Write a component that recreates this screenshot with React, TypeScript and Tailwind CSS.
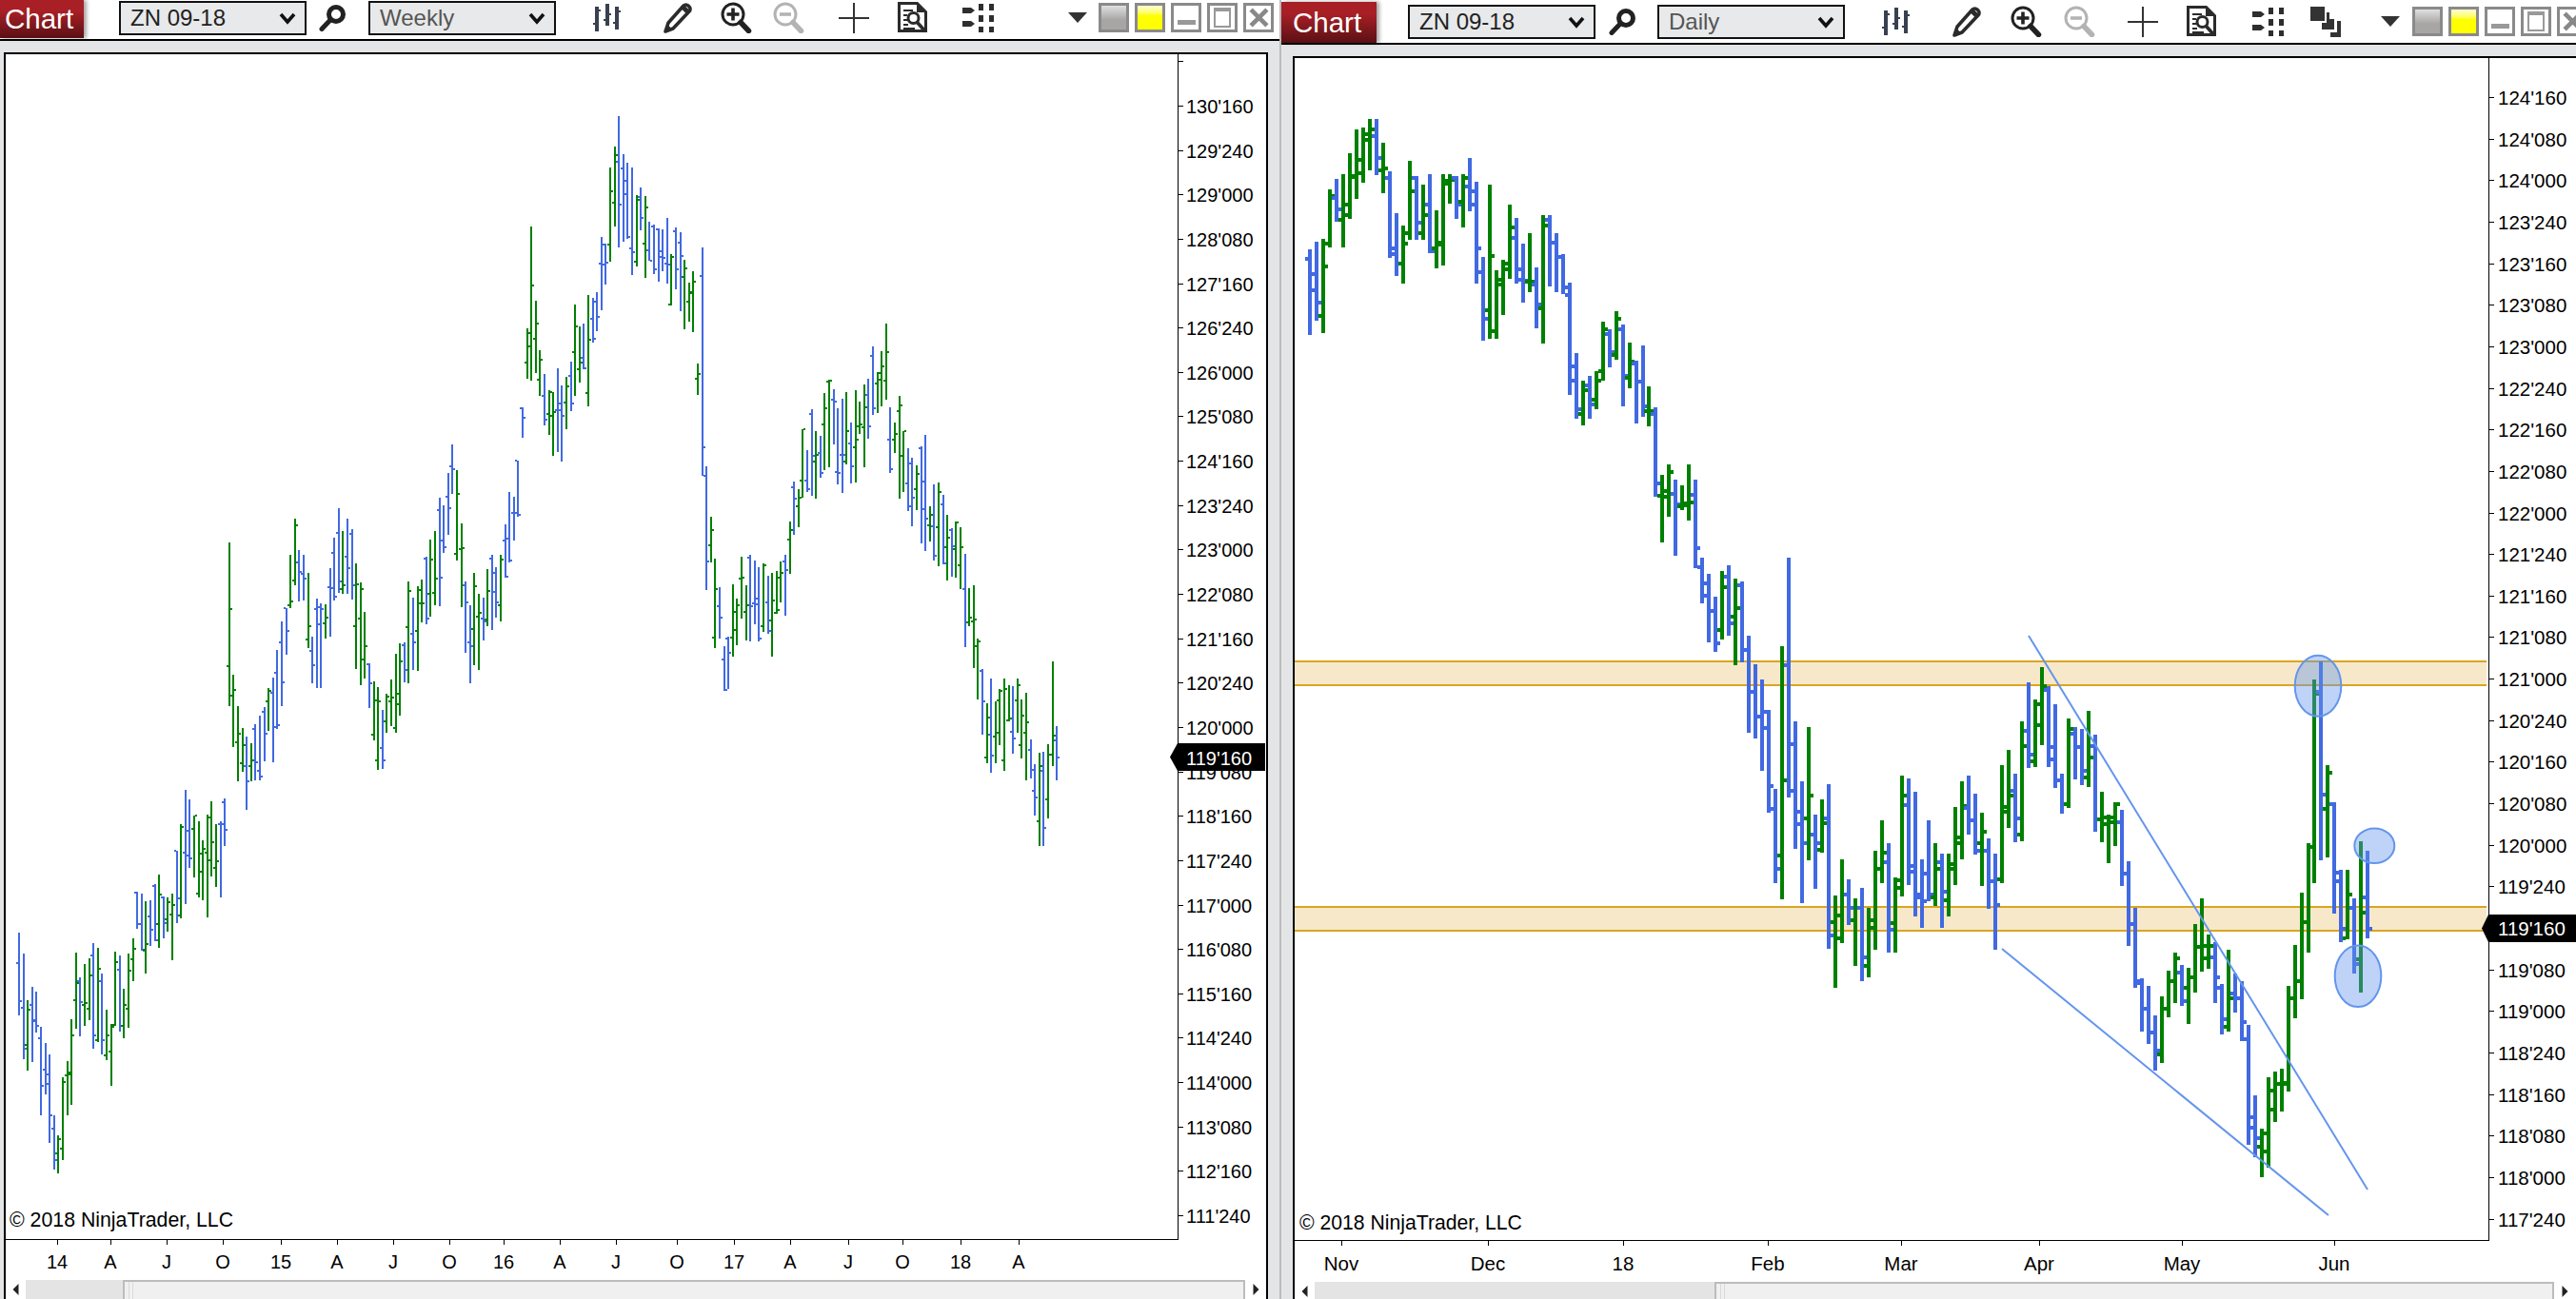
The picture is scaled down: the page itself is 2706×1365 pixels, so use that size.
import type { ReactNode } from "react";

type Bar = [high: number, low: number, open: number, close: number];

const GREEN = "#008000";
const BLUE = "#4169e1";
const LINE = "#6495ed";

// daily bars, read off the chart in crop units and converted to page pixels
const dailyA: Bar[] = [
  [517, 788, 545, 594], [492, 740, 645, 684], [483, 780, 726, 570], [327, 510, 497, 348], [294, 428, 355, 390],
  [279, 510, 423, 375], [213, 420, 408, 285], [138, 357, 288, 234], [132, 306, 276, 153], [105, 267, 171, 138],
  [105, 282, 160, 228], [180, 339, 267, 260], [270, 543, 291, 513], [402, 600, 531, 561], [441, 624, 561, 497],
  [237, 486, 465, 333], [285, 486, 291, 432], [312, 486, 465, 408], [279, 528, 375, 522], [393, 576, 513, 495],
  [279, 567, 501, 300], [279, 372, 309, 297], [285, 420, 291, 375], [279, 447, 366, 291], [228, 396, 318, 333],
  [303, 624, 375, 513], [540, 804, 588, 735], [312, 798, 708, 537], [582, 798, 774, 612], [549, 723, 627, 561],
  [375, 609, 579, 447], [417, 624, 480, 579], [498, 684, 612, 615], [465, 651, 618, 618], [573, 765, 627, 690],
  [408, 813, 702, 441], [408, 633, 423, 495], [465, 651, 495, 540], [531, 657, 540, 636], [621, 975, 660, 930],
  [843, 1050, 885, 1020], [930, 1070, 1035, 960], [915, 1050, 945, 1005], [900, 1020, 990, 930], [744, 930, 900, 768],
  [768, 888, 783, 840], [711, 864, 849, 735],
];

const dailyB: Bar[] = [
  [85, 262, 95, 195], [124, 222, 200, 166], [163, 300, 170, 208], [130, 285, 208, 262], [219, 305, 272, 272],
  [264, 457, 278, 430], [411, 558, 455, 445], [388, 502, 458, 404], [421, 587, 452, 475], [433, 487, 478, 472],
  [388, 510, 476, 470], [421, 613, 453, 570], [590, 688, 610, 645], [625, 773, 672, 706], [675, 795, 706, 775],
  [619, 767, 747, 655], [607, 760, 632, 733], [635, 822, 717, 700], [642, 818, 650, 790], [759, 969, 790, 880],
  [821, 981, 880, 935], [854, 1053, 935, 960], [921, 1144, 925, 1086], [1091, 1295, 1135, 1265], [782, 1330, 1236, 1072],
  [590, 1109, 824, 1095], [945, 1222, 994, 1140], [1075, 1340, 1167, 1209], [957, 1245, 1156, 1105], [1147, 1307, 1190, 1209],
  [1114, 1229, 1224, 1165], [1081, 1437, 1156, 1410], [1322, 1522, 1381, 1365], [1244, 1425, 1415, 1320], [1287, 1385, 1320, 1350],
  [1329, 1476, 1376, 1350], [1306, 1509, 1350, 1457], [1349, 1499, 1476, 1376], [1226, 1441, 1392, 1265], [1159, 1295, 1265, 1229],
  [1209, 1447, 1250, 1397], [1283, 1447, 1382, 1290], [1063, 1324, 1306, 1105], [1069, 1301, 1127, 1270], [1098, 1369, 1259, 1320],
  [1244, 1392, 1326, 1335], [1159, 1335, 1275, 1320], [1209, 1346, 1326, 1265], [1232, 1392, 1250, 1315], [1232, 1369, 1332, 1265],
  [1131, 1301, 1255, 1196], [1075, 1245, 1208, 1128], [1063, 1190, 1133, 1160], [1102, 1234, 1160, 1225], [1143, 1301, 1208, 1185],
  [1199, 1352, 1225, 1292], [1232, 1441, 1292, 1342], [1040, 1295, 1288, 1130], [1007, 1177, 1140, 1105], [1058, 1206, 1095, 1156],
];

const dailyC: Bar[] = [
  [261, 566, 548, 324], [162, 380, 285, 345], [204, 375, 363, 216], [123, 321, 270, 172], [171, 375, 180, 325],
  [216, 428, 356, 410], [393, 495, 410, 471], [254, 480, 470, 280], [276, 408, 292, 325], [280, 422, 325, 385],
  [234, 428, 402, 352], [294, 540, 324, 510], [438, 567, 510, 505], [497, 620, 520, 503], [466, 578, 515, 470],
  [485, 678, 515, 646], [615, 830, 646, 775], [733, 936, 775, 925], [912, 1047, 920, 990], [931, 1077, 990, 1050],
  [1005, 1146, 1050, 1095], [958, 1127, 1105, 990], [893, 1012, 990, 920], [847, 975, 920, 862], [878, 982, 897, 970],
  [885, 1028, 935, 910], [774, 948, 910, 833], [709, 895, 833, 830], [800, 887, 860, 830], [821, 975, 858, 910],
  [926, 1053, 935, 1015], [839, 1047, 1035, 962], [900, 1000, 950, 962], [920, 1073, 962, 1022], [1030, 1335, 1065, 1265],
  [1209, 1366, 1290, 1318], [1293, 1415, 1338, 1305], [1163, 1392, 1350, 1196], [1148, 1275, 1245, 1180], [1141, 1250, 1180, 1180],
  [931, 1198, 1178, 962], [827, 1012, 962, 920], [695, 966, 920, 770], [570, 848, 770, 580], [154, 670, 580, 190],
];

const dailyD: Bar[] = [
  [135, 762, 230, 555], [462, 752, 600, 485], [580, 932, 585, 827], [793, 1022, 800, 977], [792, 1012, 1008, 870],
  [882, 1120, 912, 1090], [702, 1178, 1075, 927], [732, 1007, 878, 977],
];

const mapBars = (rows: Bar[], fn: (v: number) => number) => rows.map((r) => r.map(fn) as Bar);

const dailyBars: Bar[] = [
  ...mapBars(dailyA, (v) => 90 + v / 3),
  ...mapBars(dailyB, (v) => 300 + v / 2.063),
  ...mapBars(dailyC, (v) => 650 + v / 2.412),
  ...mapBars(dailyD, (v) => 650 + v / 3),
];

const weeklyStart: Bar[] = [
  [90, 350, 185, 305], [156, 488, 328, 455], [303, 524, 443, 332], [261, 497, 317, 368], [276, 404, 365, 384],
  [387, 665, 422, 572], [438, 599, 521, 566], [474, 752, 536, 665], [666, 836, 707, 806], [729, 848, 785, 740],
  [546, 806, 770, 560], [495, 665, 540, 538], [363, 632, 530, 413], [153, 392, 302, 248], [231, 416, 242, 308],
  [189, 383, 317, 311], [171, 365, 329, 224], [123, 455, 161, 413], [138, 434, 428, 203], [219, 473, 242, 428],
  [333, 491, 476, 413], [378, 572, 464, 380], [150, 384, 388, 182], [162, 401, 206, 383], [267, 422, 383, 317],
  [156, 389, 329, 209], [108, 242, 173, 140],
].map((r) => r.map((v) => 950 + v / 3) as Bar);

// rough middle line of the weekly chart [x, y], in the 1568-wide preview
const weeklyPath = [
  [78, 590], [85, 555], [95, 560], [105, 550], [115, 510], [125, 520], [135, 530], [142, 440], [150, 470], [160, 440],
  [170, 420], [178, 340], [185, 350], [190, 400], [198, 380], [205, 330], [212, 340], [220, 385], [230, 450], [240, 420],
  [250, 380], [258, 370], [265, 340], [275, 290], [285, 390], [295, 370], [305, 350], [315, 300], [323, 190], [330, 230],
  [340, 260], [350, 220], [360, 210], [368, 160], [375, 110], [385, 130], [395, 140], [405, 160], [415, 170], [422, 180],
  [427, 280], [435, 360], [442, 410], [450, 370], [458, 365], [465, 370], [472, 370], [480, 340], [488, 290], [495, 280],
  [505, 260], [515, 270], [525, 260], [535, 230], [545, 265], [555, 300], [565, 310], [575, 320], [585, 345], [592, 380],
  [600, 440], [610, 440], [620, 430], [628, 470], [636, 490],
];

const weeklySpikes: Record<number, Bar> = {
  48: [570, 742, 700, 640],
  117: [238, 400, 350, 300],
  137: [122, 260, 170, 215],
  156: [260, 500, 290, 470],
  157: [490, 620, 500, 590],
  198: [340, 420, 400, 370],
  234: [790, 889, 810, 870],
  235: [782, 860, 840, 793],
  236: [695, 805, 793, 773],
  237: [763, 820, 778, 796],
};

function pathY(x: number) {
  const s = x / 1.726;
  for (let i = 1; i < weeklyPath.length; i++) {
    const [x0, y0] = weeklyPath[i - 1];
    const [x1, y1] = weeklyPath[i];
    if (s <= x1) return (y0 + ((s - x0) / (x1 - x0)) * (y1 - y0)) * 1.726;
  }
  return 470 * 1.726;
}

function buildWeekly() {
  let seed = 77;
  const rnd = () => {
    seed = (seed * 16807) % 2147483647;
    return seed / 2147483647;
  };
  const bars: Bar[] = [...weeklyStart];
  for (let i = weeklyStart.length; i < 238; i++) {
    if (weeklySpikes[i]) {
      bars.push(weeklySpikes[i]);
      continue;
    }
    const mid = pathY(20 + 4.6 * i) + (rnd() - 0.5) * 30;
    const half = 26 + rnd() * 40;
    const a = mid - half * (0.5 + rnd() * 0.5);
    const b = mid + half * (0.5 + rnd() * 0.5);
    const h = b - a;
    bars.push([a, b, a + h * rnd(), a + h * rnd()]);
  }
  return bars;
}

const weeklyBars = buildWeekly();

function Bars({ bars, x0, step, width, tick }: { bars: Bar[]; x0: number; step: number; width: number; tick: number }) {
  return (
    <g shapeRendering="crispEdges">
      {bars.map(([high, low, open, close], i) => {
        const x = Math.round(x0 + step * i - width / 2);
        const fill = close <= open ? GREEN : BLUE;
        return (
          <g key={i} fill={fill}>
            <rect x={x} y={Math.round(high)} width={width} height={Math.round(low - high)} />
            <rect x={x - tick} y={Math.round(open - width / 2)} width={tick} height={width} />
            <rect x={x + width} y={Math.round(close - width / 2)} width={tick} height={width} />
          </g>
        );
      })}
    </g>
  );
}

const weeklyPrices = [
  "130'160", "129'240", "129'000", "128'080", "127'160", "126'240", "126'000", "125'080", "124'160", "123'240",
  "123'000", "122'080", "121'160", "120'240", "120'000", "119'080", "118'160", "117'240", "117'000", "116'080",
  "115'160", "114'240", "114'000", "113'080", "112'160", "111'240",
];

const dailyPrices = [
  "124'160", "124'080", "124'000", "123'240", "123'160", "123'080", "123'000", "122'240", "122'160", "122'080",
  "122'000", "121'240", "121'160", "121'080", "121'000", "120'240", "120'160", "120'080", "120'000", "119'240",
  "", "119'080", "119'000", "118'240", "118'160", "118'080", "118'000", "117'240",
];

const weeklyDates: [string, number][] = [
  ["14", 60], ["A", 116], ["J", 175], ["O", 234], ["15", 295], ["A", 354], ["J", 413], ["O", 472], ["16", 529],
  ["A", 588], ["J", 647], ["O", 711], ["17", 771], ["A", 830], ["J", 891], ["O", 948], ["18", 1009], ["A", 1070],
];

const dailyDates: [string, number][] = [
  ["Nov", 1409], ["Dec", 1563], ["18", 1705], ["Feb", 1857], ["Mar", 1997], ["Apr", 2142], ["May", 2292], ["Jun", 2452],
];

function WeeklyChart() {
  return (
    <svg viewBox="6 57 1324 1288" className="block h-[1288px] w-[1324px] shrink-0 bg-white text-[20px]">
      <Bars bars={weeklyBars} x0={20} step={4.6} width={2} tick={2} />
      <path d="M1237.5 57V1302.5H6" fill="none" stroke="#000" strokeWidth="1.5" shapeRendering="crispEdges" />
      <path d="M1237 64h6" stroke="#000" strokeWidth="1" shapeRendering="crispEdges" />
      {weeklyPrices.map((label, i) => {
        const y = 111 + 46.64 * i;
        return (
          <g key={label}>
            <path d={`M1237 ${Math.round(y)}h6`} stroke="#000" strokeWidth="1" shapeRendering="crispEdges" />
            <text x="1246" y={y + 8}>{label}</text>
          </g>
        );
      })}
      {weeklyDates.map(([label, x], i) => (
        <g key={i}>
          <path d={`M${x} 1302v6`} stroke="#000" strokeWidth="1" shapeRendering="crispEdges" />
          <text x={x} y="1333" textAnchor="middle">{label}</text>
        </g>
      ))}
      <text x="10" y="1289" className="text-[21.3px]">© 2018 NinjaTrader, LLC</text>
      <polygon points="1229,795.5 1237,781 1329,781 1329,810 1237,810" fill="#000" />
      <text x="1246" y="804" fill="#fff">119'160</text>
    </svg>
  );
}

function DailyChart() {
  return (
    <svg viewBox="1360 61 1346 1286" className="block h-[1286px] w-[1346px] shrink-0 bg-white text-[20.5px]">
      <g shapeRendering="crispEdges">
        <rect x="1360" y="695" width="1252" height="25" fill="#f7e8ca" />
        <rect x="1360" y="953" width="1252" height="25" fill="#f7e8ca" />
        <path d="M1360 695h1252M1360 720h1252M1360 953h1252M1360 978h1252" stroke="#daa520" strokeWidth="2" />
      </g>
      <Bars bars={dailyBars} x0={1376} step={6.99} width={4} tick={3} />
      <g fill="none" stroke={LINE} strokeWidth="2">
        <line x1="2131" y1="668" x2="2487" y2="1250" />
        <line x1="2103" y1="997" x2="2446" y2="1277" />
      </g>
      <g fill={LINE} fillOpacity="0.42" stroke={LINE} strokeWidth="2">
        <ellipse cx="2435" cy="720.7" rx="24.3" ry="32" />
        <ellipse cx="2494.3" cy="888.7" rx="21" ry="18.3" />
        <ellipse cx="2477" cy="1025.7" rx="24.3" ry="32.3" />
      </g>
      <path d="M2614.5 61V1303.5H1360" fill="none" stroke="#000" strokeWidth="1.5" shapeRendering="crispEdges" />
      {dailyPrices.map((label, i) => {
        const y = 102 + 43.65 * i;
        return (
          <g key={i}>
            <path d={`M2614 ${Math.round(y)}h6`} stroke="#000" strokeWidth="1" shapeRendering="crispEdges" />
            <text x="2624" y={y + 8}>{label}</text>
          </g>
        );
      })}
      {dailyDates.map(([label, x]) => (
        <g key={label}>
          <path d={`M${x} 1303v6`} stroke="#000" strokeWidth="1" shapeRendering="crispEdges" />
          <text x={x} y="1335" textAnchor="middle">{label}</text>
        </g>
      ))}
      <text x="1365" y="1292" className="text-[21.2px]">© 2018 NinjaTrader, LLC</text>
      <polygon points="2607,975.5 2614,961 2706,961 2706,990 2614,990" fill="#000" />
      <text x="2624" y="983" fill="#fff">119'160</text>
    </svg>
  );
}

function Select({ label, tone, className }: { label: string; tone: string; className: string }) {
  return (
    <div className={`flex h-[36px] w-[197px] shrink-0 items-center justify-between border-2 border-[#111] bg-[#e8e9ea] pl-[10px] pr-[9px] text-[24px] ${tone} ${className}`}>
      <span>{label}</span>
      <svg viewBox="0 0 18 14" className="h-[14px] w-[18px]">
        <path d="M2 3l7 8 7-8" fill="none" stroke="#111" strokeWidth="3.6" />
      </svg>
    </div>
  );
}

function ChartTab({ className }: { className: string }) {
  return (
    <div className={`flex shrink-0 items-center bg-gradient-to-b from-[#a81f26] from-30% to-[#5b1015] text-[29.5px] leading-none text-white shadow-[3px_0_4px_rgba(0,0,0,0.35)] ${className}`}>
      Chart
    </div>
  );
}

function Tool({ w, h, className, children }: { w: string; h: string; className: string; children: ReactNode }) {
  return <div className={`flex shrink-0 items-center justify-center ${w} ${h} ${className}`}>{children}</div>;
}

function SearchIcon() {
  return (
    <svg viewBox="0 0 29 28" className="h-[28px] w-[29px]">
      <circle cx="18" cy="10" r="7.5" fill="none" stroke="#222" strokeWidth="5" />
      <line x1="12" y1="16" x2="3" y2="25.5" stroke="#222" strokeWidth="5" strokeLinecap="round" />
    </svg>
  );
}

function BarsIcon() {
  return (
    <svg viewBox="0 0 29 30" className="h-[30px] w-[29px]" shapeRendering="crispEdges">
      <path d="M4 3v26M15 0v23M25 3v24" stroke="#39404f" strokeWidth="3.5" />
      <path d="M0 21h3M6 7h2M11 17h3M17 11h2M21 20h3M27 8h2" stroke="#39404f" strokeWidth="2" />
    </svg>
  );
}

function PencilIcon() {
  return (
    <svg viewBox="0 0 30 32" className="h-[32px] w-[30px]">
      <path d="M2 30l3-9L21 3a3.5 3.5 0 0 1 5 0l1 1a3.5 3.5 0 0 1 0 5L10 27z" fill="#fff" stroke="#2b2b2b" strokeWidth="3.6" strokeLinejoin="round" />
      <path d="M20 4l6 6" stroke="#2b2b2b" strokeWidth="5" />
      <path d="M2 31l2-8 6 5z" fill="#2b2b2b" />
    </svg>
  );
}

function ZoomIcon({ plus, color }: { plus: boolean; color: string }) {
  return (
    <svg viewBox="0 0 33 33" className="h-[33px] w-[33px]">
      <circle cx="13" cy="13" r="11" fill="none" stroke={color} strokeWidth="3" />
      <path d={plus ? "M6.5 13h13M13 6.5v13" : "M7 13h12"} stroke={color} strokeWidth="3.6" />
      <line x1="21" y1="21.5" x2="29.5" y2="30.5" stroke={color} strokeWidth="5.5" strokeLinecap="round" />
    </svg>
  );
}

function CrossIcon() {
  return (
    <svg viewBox="0 0 32 32" className="h-[32px] w-[32px]" shapeRendering="crispEdges">
      <path d="M0 16h32M16 0v32" stroke="#333" strokeWidth="2" />
    </svg>
  );
}

function DocIcon() {
  return (
    <svg viewBox="0 0 32 33" className="h-[33px] w-[32px]">
      <path d="M1.5 1.5h19l9 9v20h-28z" fill="#fff" stroke="#2b2b2b" strokeWidth="3" />
      <path d="M20 2v9h9" fill="#2b2b2b" />
      <path d="M6 9h10M6 14h4M6 19h4M6 24h5M6 28h12" stroke="#2b2b2b" strokeWidth="2" />
      <circle cx="16.5" cy="17" r="5.5" fill="#fff" stroke="#2b2b2b" strokeWidth="3" />
      <line x1="20.5" y1="21.5" x2="29" y2="31" stroke="#2b2b2b" strokeWidth="3.6" />
    </svg>
  );
}

function SeriesIcon() {
  return (
    <svg viewBox="0 0 33 30" className="h-[30px] w-[33px]" fill="#2e2e2e">
      <path d="M0 4h9l4 3-4 3H0zM0 18h9l4 3-4 3H0z" />
      <path d="M17 0h5v7h-5zM28 0h5v7h-5zM17 12h5v7h-5zM28 12h5v7h-5zM17 24h5v6h-5zM28 24h5v6h-5z" />
    </svg>
  );
}

function LayersIcon() {
  return (
    <svg viewBox="0 0 32 32" className="h-[32px] w-[32px]" fill="#333">
      <path d="M0 0h15v15H0zM17 6h3v7h-3zM12 17h5v-4h8v11H12zM28 15h4v17H21v-5h7z" />
    </svg>
  );
}

function WindowButtons({ className }: { className: string }) {
  const box = "h-[31px] w-[32px] shrink-0 border-[3px] border-[#8a8a8a]";
  return (
    <div className={`flex shrink-0 gap-[6px] ${className}`}>
      <div className={`${box} bg-gradient-to-b from-[#e0e0e0] to-[#a8a5a5] to-60%`} />
      <div className={`${box} bg-gradient-to-b from-[#fdfdd0] to-[#ffff00] to-40%`} />
      <div className={`${box} flex items-end justify-center bg-white pb-[5px]`}>
        <div className="h-[5px] w-[19px] bg-[#999]" />
      </div>
      <div className={`${box} flex items-center justify-center bg-white`}>
        <div className="h-[21px] w-[18px] border-2 border-t-[4px] border-[#999]" />
      </div>
      <div className={`${box} flex items-center justify-center bg-white`}>
        <svg viewBox="0 0 20 20" className="h-[21px] w-[21px]">
          <path d="M2 2l16 16M18 2L2 18" stroke="#888" strokeWidth="4.4" />
        </svg>
      </div>
    </div>
  );
}

function Caret({ className }: { className: string }) {
  return (
    <svg viewBox="0 0 20 11" className={`h-[11px] w-[20px] shrink-0 ${className}`}>
      <path d="M0 0h20L10 11z" fill="#333" />
    </svg>
  );
}

function ScrollBar({ track, thumb, pad }: { track: string; thumb: string; pad: string }) {
  return (
    <div className="flex h-[20px] w-full overflow-hidden bg-white">
      <div className={`flex shrink-0 items-center justify-center bg-white ${pad}`}>
        <svg viewBox="0 0 6 12" className="h-[12px] w-[7px]"><path d="M6 0v12L0 6z" fill="#222" /></svg>
      </div>
      <div className={`shrink-0 bg-[#e4e4e4] ${track}`} />
      <div className={`flex shrink-0 items-start border-2 border-b-0 border-[#bcbcbc] bg-[#f0f0f0] pl-[4px] ${thumb}`}>
        <div className="h-full w-[5px] border-x border-[#dadada]" />
      </div>
      <div className="flex flex-1 items-center justify-center bg-white">
        <svg viewBox="0 0 6 12" className="h-[12px] w-[7px]"><path d="M0 0v12l6-6z" fill="#222" /></svg>
      </div>
    </div>
  );
}

export default function App() {
  return (
    <div className="flex h-[1365px] w-[2706px] overflow-hidden bg-[#e4e5e7] font-['Liberation_Sans',Arial,sans-serif] text-black">
      <section className="flex w-[1344px] shrink-0 flex-col">
        <div className="flex h-[41px] shrink-0 border-b-0 bg-white">
          <ChartTab className="h-[40px] w-[88px] pl-[5px]" />
          <div className="flex h-[37px] items-center">
            <Select label="ZN 09-18" tone="text-[#222]" className="ml-[37px]" />
            <Tool w="w-[29px]" h="h-[30px]" className="ml-[13px]"><SearchIcon /></Tool>
            <Select label="Weekly" tone="text-[#555]" className="ml-[23px]" />
            <Tool w="w-[29px]" h="h-[30px]" className="ml-[39px]"><BarsIcon /></Tool>
            <Tool w="w-[30px]" h="h-[32px]" className="ml-[45px]"><PencilIcon /></Tool>
            <Tool w="w-[33px]" h="h-[33px]" className="ml-[30px]"><ZoomIcon plus color="#222" /></Tool>
            <Tool w="w-[33px]" h="h-[33px]" className="ml-[22px]"><ZoomIcon plus={false} color="#b3b3b3" /></Tool>
            <Tool w="w-[32px]" h="h-[32px]" className="ml-[36px]"><CrossIcon /></Tool>
            <Tool w="w-[32px]" h="h-[33px]" className="ml-[30px]"><DocIcon /></Tool>
            <Tool w="w-[33px]" h="h-[30px]" className="ml-[36px]"><SeriesIcon /></Tool>
            <Caret className="ml-[78px]" />
            <WindowButtons className="ml-[12px]" />
          </div>
        </div>
        <div className="h-[2px] shrink-0 bg-black" />
        <div className="h-[12px] shrink-0" />
        <div className="ml-[4px] w-[1328px] flex-1 border-x-2 border-t-2 border-black bg-white">
          <WeeklyChart />
          <ScrollBar pad="w-[21px]" track="w-[102px]" thumb="w-[1179px]" />
        </div>
      </section>

      <div className="w-[2px] shrink-0 bg-[#bcbcbc]" />

      <section className="flex flex-1 flex-col overflow-hidden">
        <div className="flex h-[45px] shrink-0 bg-white">
          <ChartTab className="mt-[2px] h-[43px] w-[100px] pl-[12px]" />
          <div className="mt-[4px] flex h-[37px] items-center">
            <Select label="ZN 09-18" tone="text-[#222]" className="ml-[33px]" />
            <Tool w="w-[29px]" h="h-[30px]" className="ml-[14px]"><SearchIcon /></Tool>
            <Select label="Daily" tone="text-[#555]" className="ml-[22px]" />
            <Tool w="w-[29px]" h="h-[30px]" className="ml-[39px]"><BarsIcon /></Tool>
            <Tool w="w-[30px]" h="h-[32px]" className="ml-[45px]"><PencilIcon /></Tool>
            <Tool w="w-[33px]" h="h-[33px]" className="ml-[31px]"><ZoomIcon plus color="#222" /></Tool>
            <Tool w="w-[33px]" h="h-[33px]" className="ml-[23px]"><ZoomIcon plus={false} color="#b3b3b3" /></Tool>
            <Tool w="w-[32px]" h="h-[32px]" className="ml-[34px]"><CrossIcon /></Tool>
            <Tool w="w-[32px]" h="h-[33px]" className="ml-[30px]"><DocIcon /></Tool>
            <Tool w="w-[33px]" h="h-[30px]" className="ml-[37px]"><SeriesIcon /></Tool>
            <Tool w="w-[32px]" h="h-[32px]" className="ml-[28px]"><LayersIcon /></Tool>
            <Caret className="ml-[42px]" />
            <WindowButtons className="ml-[13px]" />
          </div>
        </div>
        <div className="h-[2px] shrink-0 bg-black" />
        <div className="h-[12px] shrink-0" />
        <div className="ml-[12px] flex-1 border-l-2 border-t-2 border-black bg-white">
          <DailyChart />
          <ScrollBar pad="w-[21px]" track="w-[420px]" thumb="w-[882px]" />
        </div>
      </section>
    </div>
  );
}
